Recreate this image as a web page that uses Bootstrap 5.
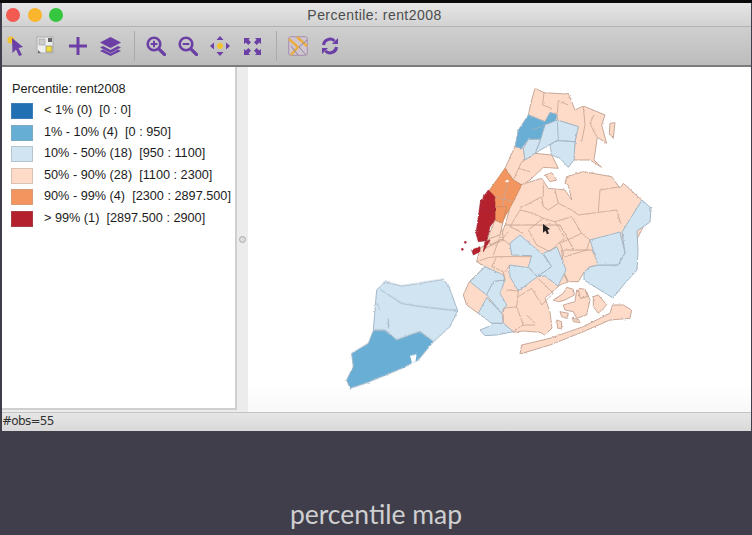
<!doctype html>
<html lang="en">
<head>
<meta charset="utf-8">
<title>Percentile map</title>
<link rel="stylesheet" href="https://cdn.jsdelivr.net/npm/bootstrap@5.3.0/dist/css/bootstrap.min.css">
<style>
html,body{height:100%}
body{background:#3f3e4a;overflow:hidden;font-family:"Liberation Sans",Arial,sans-serif;color:#1c1c1c}
.top-strip{height:3px;background:#0a0a0a}
.app-win{height:428px;margin-left:2px;margin-right:1px;background:#d9d9d9}
.title-bar{height:24px;background:linear-gradient(#e6e6e6,#d2d2d2);border-bottom:1px solid #b4b4b4}
.tl{width:14px;height:14px;border-radius:50%}
.tl-r{background:#f25a52}.tl-y{background:#f9b52c}.tl-g{background:#34c63f}
.traffic{left:4px;top:5px;gap:7.500px}
.title-text{font-size:14px;color:#4c4c4c;letter-spacing:.45px;padding-right:4px;padding-top:1px}
.tool-bar{height:40px;background:linear-gradient(#cfcfcf,#bcbcbc);border-bottom:2px solid #7c7c7c}
.tb-btn{width:32px;height:36px}
.tb-first{width:28px}
.tb-sep{width:1px;height:30px;background:#aaa;margin:0 5px 0 8px}
.work-area{height:345px;background:#ececec}
.legend-pane{width:235px;background:#fff;border-right:2px solid #cfcfcf;border-bottom:2px solid #cfcfcf;padding:15px 0 0 9px;font-size:12.7px;height:343px}
.split-bar{width:11px}
.grip{width:7px;height:7px;border-radius:50%;border:1px solid #aaa;background:#ddd}
.map-pane{background:linear-gradient(#fff 92%,#f8f8f8)}
.map-pane svg{display:block}
.rough{filter:url(#rough)}
.lg-title{height:15px;line-height:15px;margin:0 0 6px 1px}
.lg-row{height:21.5px;gap:11px;white-space:pre;line-height:15px}
.swatch{width:22px;height:16px;border:1px solid #9a9a9a}
.c1{background:#2270b4;border-color:#3f7fb5}.c2{background:#67aed5;border-color:#7ba9c6}
.c3{background:#d1e4f1;border-color:#b7c4cf}.c4{background:#fddbc8;border-color:#d9c2b4}
.c5{background:#f3955f;border-color:#d99a78}.c6{background:#b5202e;border-color:#a83c44}
.status-bar{height:19px;background:linear-gradient(#e6e6e6,#d9d9d9);border-top:1px solid #c4c4c4;font:12px "DejaVu Sans",sans-serif;letter-spacing:-.7px;color:#333;line-height:17px}
.caption-text{height:104px;padding-top:66px;font:26.500px Lato,sans-serif;color:#cfcfd1;line-height:34px}
.pe polygon{fill:#fddbc8}
.lb polygon{fill:#d1e4f1}
.mb polygon{fill:#67aed5}
.or polygon{fill:#f3955f}
.rd polygon{fill:#b5202e}
.pe polygon,.lb polygon,.mb polygon{stroke-width:3;stroke-linejoin:round}
.pe polygon{stroke:#c7a797}
.lb polygon,.mb polygon{stroke:#a3b6c6}
.or polygon{stroke:#c98a64;stroke-width:2.5}
.rd polygon,.rd circle{fill:#b5202e;stroke:#a12a38;stroke-width:2}
.pe-lines polyline{fill:none;stroke:#c7a797;stroke-width:2.600;stroke-linejoin:round}
.lb-lines polyline{fill:none;stroke:#9db0c0;stroke-width:2.600}
.thin-edge polygon{stroke-width:1}
</style>
</head>
<body>
<div class="top-strip"></div>
<div class="app-win d-flex flex-column">
  <div class="title-bar d-flex align-items-center justify-content-center position-relative flex-shrink-0">
    <div class="traffic position-absolute d-flex"><span class="tl tl-r"></span><span class="tl tl-y"></span><span class="tl tl-g"></span></div>
    <span class="title-text">Percentile: rent2008</span>
  </div>
  <div class="tool-bar d-flex align-items-center flex-shrink-0">
    <div class="tb-btn tb-first d-flex align-items-center justify-content-center">
      <svg width="20" height="22" viewBox="0 0 20 22"><circle cx="5" cy="5" r="3.600" fill="#f0c330"/><path d="M6 3 L17 12 L12.500 13 L16 20 L13 21 L10 14.500 L6.500 18Z" fill="#6b3fa5"/></svg>
    </div>
    <div class="tb-btn d-flex align-items-center justify-content-center">
      <svg width="20" height="20" viewBox="0 0 20 20"><rect x="1" y="1" width="16" height="16" fill="#eee" stroke="#aaa"/><rect x="3" y="3" width="6" height="6" fill="#ccc" stroke="#999" stroke-width=".6"/><rect x="10" y="10" width="6" height="6" fill="#f2dc3c" stroke="#777" stroke-width=".6"/><path d="M12 2h4v4h-4zM2 14l3 3H2z" fill="#666"/></svg>
    </div>
    <div class="tb-btn d-flex align-items-center justify-content-center">
      <svg width="18" height="18" viewBox="0 0 18 18"><path d="M7.500 0h3v7.500H18v3h-7.500V18h-3v-7.500H0v-3h7.500z" fill="#6b3fa5"/></svg>
    </div>
    <div class="tb-btn d-flex align-items-center justify-content-center">
      <svg width="21" height="19" viewBox="0 0 21 19"><path d="M10.500 0 21 5.500 10.500 11 0 5.500z" fill="#6b3fa5"/><path d="M3 9 0 10.500 10.500 16 21 10.500 18 9 10.500 13z" fill="#6b3fa5"/><path d="M3 12.500 0 14 10.500 19 21 14 18 12.500 10.500 16.500z" fill="#6b3fa5"/></svg>
    </div>
    <div class="tb-sep"></div>
    <div class="tb-btn d-flex align-items-center justify-content-center">
      <svg width="20" height="20" viewBox="0 0 20 20" fill="none" stroke="#6b3fa5"><circle cx="8" cy="8" r="6.300" stroke-width="2.600"/><path d="M12.800 12.800 18.500 18.500" stroke-width="3.200" stroke-linecap="round"/><path d="M8 4.700v6.600M4.700 8h6.600" stroke-width="2"/></svg>
    </div>
    <div class="tb-btn d-flex align-items-center justify-content-center">
      <svg width="20" height="20" viewBox="0 0 20 20" fill="none" stroke="#6b3fa5"><circle cx="8" cy="8" r="6.300" stroke-width="2.600"/><path d="M12.800 12.800 18.500 18.500" stroke-width="3.200" stroke-linecap="round"/><path d="M4.700 8h6.600" stroke-width="2"/></svg>
    </div>
    <div class="tb-btn d-flex align-items-center justify-content-center">
      <svg width="20" height="20" viewBox="0 0 20 20"><path d="M10 0 13.500 4h-7zM10 20 6.500 16h7zM0 10 4 6.500v7zM20 10 16 13.500v-7z" fill="#6b3fa5"/><circle cx="10" cy="10" r="3" fill="#f0c330"/></svg>
    </div>
    <div class="tb-btn d-flex align-items-center justify-content-center">
      <svg width="17" height="17" viewBox="0 0 17 17" fill="#6b3fa5"><path d="M0 0h6L4.500 1.800 7 4.300 4.300 7 1.800 4.500 0 6zM17 0v6l-1.800-1.500L12.700 7 10 4.300l2.500-2.500L11 0zM0 17v-6l1.800 1.500L4.300 10 7 12.700l-2.500 2.500L6 17zM17 17h-6l1.500-1.800L10 12.700 12.700 10l2.500 2.500L17 11z"/></svg>
    </div>
    <div class="tb-sep"></div>
    <div class="tb-btn d-flex align-items-center justify-content-center">
      <svg width="20" height="20" viewBox="0 0 20 20"><rect x=".7" y=".7" width="18.600" height="18.600" rx="2" fill="#cfc4cf" stroke="#a58fb0"/><path d="M1 3 10 11 3 19M9 1l10 9" fill="none" stroke="#e9ae3f" stroke-width="2.400"/><path d="M19 4 11 11l7 8M3 10l7 9" fill="none" stroke="#8f86a0" stroke-width="1"/></svg>
    </div>
    <div class="tb-btn d-flex align-items-center justify-content-center">
      <svg width="18" height="18" viewBox="0 0 18 18" fill="none" stroke="#6b3fa5" stroke-width="3"><path d="M2.500 8A6.500 6.500 0 0 1 13.500 4"/><path d="M15.500 10A6.500 6.500 0 0 1 4.500 14"/><path d="M11 7h6V1zM7 11H1v6z" fill="#6b3fa5" stroke="none"/></svg>
    </div>
  </div>
  <div class="work-area d-flex flex-shrink-0">
    <div class="legend-pane flex-shrink-0">
      <div class="lg-title">Percentile: rent2008</div>
      <div class="lg-row d-flex align-items-start"><span class="swatch c1 flex-shrink-0"></span><span>&lt; 1% (0)  [0 : 0]</span></div>
      <div class="lg-row d-flex align-items-start"><span class="swatch c2 flex-shrink-0"></span><span>1% - 10% (4)  [0 : 950]</span></div>
      <div class="lg-row d-flex align-items-start"><span class="swatch c3 flex-shrink-0"></span><span>10% - 50% (18)  [950 : 1100]</span></div>
      <div class="lg-row d-flex align-items-start"><span class="swatch c4 flex-shrink-0"></span><span>50% - 90% (28)  [1100 : 2300]</span></div>
      <div class="lg-row d-flex align-items-start"><span class="swatch c5 flex-shrink-0"></span><span>90% - 99% (4)  [2300 : 2897.500]</span></div>
      <div class="lg-row d-flex align-items-start"><span class="swatch c6 flex-shrink-0"></span><span>&gt; 99% (1)  [2897.500 : 2900]</span></div>
    </div>
    <div class="split-bar d-flex align-items-center justify-content-center flex-shrink-0"><span class="grip"></span></div>
    <div class="map-pane flex-grow-1">
      <svg width="503" height="345" viewBox="248 67 503 345" role="img" aria-label="Percentile map of New York City">
        <defs>
          <filter id="rough" x="-5%" y="-5%" width="110%" height="110%">
            <feTurbulence type="fractalNoise" baseFrequency=".35" numOctaves="2" seed="4" result="n"/>
            <feDisplacementMap in="SourceGraphic" in2="n" scale="2.200" xChannelSelector="R" yChannelSelector="G"/>
            <feGaussianBlur stdDeviation=".4"/>
          </filter>
        </defs>
        <g class="rough">
        <!-- Bronx and upper Manhattan -->
        <g transform="translate(450 80) scale(.3333)">
          <g class="pe">
            <polygon points="255,25 282,38 345,42 355,40 375,90 400,78 465,105 455,135 470,190 442,172 432,240 455,262 420,240 372,240 375,185 385,140 322,120 320,100 300,100 285,125 235,105 245,60"/>
            <polygon points="480,130 495,128 490,175 478,160"/>
            <polygon points="220,205 225,240 255,220 305,225 325,265 280,262 240,300 215,315 190,300 165,265 195,200"/>
            <polygon points="285,285 305,278 320,300 300,305"/>
          </g>
          <g class="mb"><polygon points="235,105 285,125 300,97 322,105 315,125 285,135 275,178 235,178 215,205 195,200 205,150"/></g>
          <g class="lb">
            <polygon points="322,120 385,140 375,185 320,182 305,190 255,220 272,178 285,135"/>
            <polygon points="320,182 375,185 372,240 355,262 330,235 305,225 300,195"/>
            <polygon points="235,178 272,178 255,220 225,240 220,205"/>
          </g>
          <g class="pe-lines">
            <polyline points="282,38 278,75 305,85"/><polyline points="355,75 325,62 322,100"/><polyline points="400,78 405,135 395,185"/><polyline points="432,105 420,130 440,170"/><polyline points="190,300 215,245 225,240"/><polyline points="205,265 240,275"/>
          </g>
          <g class="lb-lines"><polyline points="245,150 260,145 285,135"/><polyline points="322,125 325,180"/></g>
        </g>
        <!-- Queens -->
        <g transform="translate(500 160) scale(.3333)">
          <g class="pe"><polygon points="30,140 60,75 125,55 145,85 195,90 215,120 205,75 195,70 200,50 250,35 335,50 360,85 370,70 425,120 453,150 440,180 380,300 270,300 100,300 5,300 15,200"/></g>
        </g>
        <!-- Brooklyn base -->
        <g transform="translate(460 225) scale(.3333)">
          <g class="pe">
            <polygon points="125,28 135,0 300,0 345,80 345,110 309,144 324,171 300,180 255,219 270,261 276,309 255,330 240,322 190,318 160,322 130,295 55,265 20,240 10,210 28,170 75,125 50,110 60,70"/>
            <polygon points="85,20 125,10 130,40 90,60"/>
          </g>
        </g>
        <!-- Rockaway -->
        <g transform="translate(450 210) scale(.3333)">
          <g class="pe"><polygon points="210,432 215,405 300,385 400,350 480,310 488,285 520,285 545,300 540,325 480,330 400,365 300,405"/></g>
        </g>
        <!-- South Queens, Jamaica Bay -->
        <g transform="translate(545 250) scale(.3333)">
          <g class="pe">
            <polygon points="50,0 140,0 165,45 135,50 118,65 100,95 70,95 58,70 55,45"/>
            <polygon points="25,150 55,130 65,112 85,118 88,135 60,150 40,155"/>
            <polygon points="95,120 125,125 135,150 125,195 95,205 85,185 60,180 55,165 90,155"/>
            <polygon points="100,115 120,118 128,140 105,145"/>
            <polygon points="145,140 160,135 185,165 160,190 145,170"/>
            <polygon points="45,185 70,190 65,205 50,200"/>
            <polygon points="35,210 50,215 50,235 38,235"/>
            <polygon points="82,205 100,208 105,218 85,215"/>
          </g>
        </g>
        <!-- Blue areas of Queens in page coordinates -->
        <g class="lb thin-edge">
          <polygon points="642,200 651,208 650,222 637,231 638,250 637,270 625,283 613,298 584,280 584,272 590,267 598,265 618,265 625,253 622,232"/>
          <polygon points="590,240 620,232 625,253 618,265 598,265"/>
        </g>
        <!-- Brooklyn blue and borders -->
        <g transform="translate(460 225) scale(.3333)">
          <g class="lb">
            <polygon points="150,55 180,30 250,90 275,125 232,155 205,125 215,92 155,90"/>
            <polygon points="148,120 205,128 232,155 175,198 150,155"/>
            <polygon points="30,170 60,140 75,125 130,150 135,165 100,170 80,210"/>
            <polygon points="80,210 100,170 135,165 120,205 140,240 125,265"/>
            <polygon points="55,265 80,218 125,265 130,295 95,295"/>
            <polygon points="60,315 85,305 95,295 130,295 160,320 110,330 75,332"/>
            <polygon points="250,85 291,66 318,135 294,183 255,153 232,155 275,125"/>
          </g>
          <g class="pe-lines">
            <polyline points="85,98 110,95 215,95"/><polyline points="85,98 50,110"/><polyline points="110,95 95,125 130,140 135,165"/><polyline points="135,140 150,120"/>
            <polyline points="140,195 175,198 170,245 130,250 130,295"/><polyline points="170,245 190,300 225,300"/>
            <polyline points="232,158 280,205 245,240 215,190 175,215"/><polyline points="160,320 190,300"/><polyline points="200,270 225,295"/><polyline points="150,60 120,35 100,90"/><polyline points="130,45 75,70"/>
          </g>
        </g>
        <g transform="translate(500 160) scale(.3333)">
          <g class="pe-lines">
            <polyline points="235,165 350,150 362,190"/><polyline points="300,90 295,155"/><polyline points="300,90 360,80"/><polyline points="215,170 245,220 180,250"/>
            <polyline points="85,210 130,175 165,185 195,235 175,250 150,275 110,255 85,210"/><polyline points="60,145 125,110 130,140 145,150 175,130 215,150 235,165"/><polyline points="165,185 215,170"/>
            <polyline points="130,175 100,160 60,150 30,200 70,220"/><polyline points="130,70 130,110"/><polyline points="175,130 165,90"/><polyline points="180,250 195,290 260,270 270,240 245,220"/><polyline points="25,215 5,240"/>
          </g>
        </g>
        <!-- Manhattan -->
        <g transform="translate(450 80) scale(.3333)">
          <g class="or"><polygon points="165,265 190,300 215,315 190,365 160,420 135,420 115,335"/></g>
          <g class="pe-lines"><polyline points="135,350 190,365"/><polyline points="175,300 165,340 150,420"/></g>
          <circle cx="172" cy="303" r="4" fill="#fff"/>
        </g>
        <g transform="translate(450 210) scale(.3333)">
          <g class="pe"><polygon points="135,30 158,40 150,75 120,85 110,92"/></g>
          <g class="or"><polygon points="135,-10 170,-10 158,40 135,30"/></g>
          <g class="rd"><polygon points="92,-30 135,-25 135,30 120,50 110,92 85,95 78,70"/><polygon points="65,120 90,110 90,125 70,135"/><polygon points="105,95 120,90 100,125"/><circle cx="46" cy="97" r="3"/><circle cx="37" cy="118" r="3"/></g>
        </g>
        <g transform="translate(450 80) scale(.3333)">
          <g class="rd"><polygon points="115,330 135,350 130,395 90,390 100,350"/></g>
        </g>
        <!-- Staten Island -->
        <g transform="translate(335 270) scale(.3333)">
          <g class="lb"><polygon points="150,35 200,48 250,40 325,28 342,50 368,122 345,170 295,215 255,185 185,210 150,180 115,180 125,60"/></g>
          <g class="mb"><polygon points="115,182 150,182 185,210 255,185 295,215 250,270 200,295 140,320 90,340 45,355 35,330 55,290 50,250 100,220"/></g>
          <g class="lb-lines"><polyline points="135,58 200,100 260,110 365,122"/><polyline points="125,100 135,120"/><polyline points="160,145 160,175"/></g>
          <polygon points="225,258 245,252 242,272 232,282" fill="#fff"/>
        </g>
        </g>
        <path d="M543 224l7 5-2.500 1 1.500 3.500-2 .8-1.500-3.500-2.500 2z" fill="#222"/>
      </svg>
    </div>
  </div>
  <div class="status-bar flex-shrink-0">#obs=55</div>
</div>
<div class="caption-text text-center">percentile map</div>
<script src="https://cdn.jsdelivr.net/npm/bootstrap@5.3.0/dist/js/bootstrap.bundle.min.js"></script>
</body>
</html>
